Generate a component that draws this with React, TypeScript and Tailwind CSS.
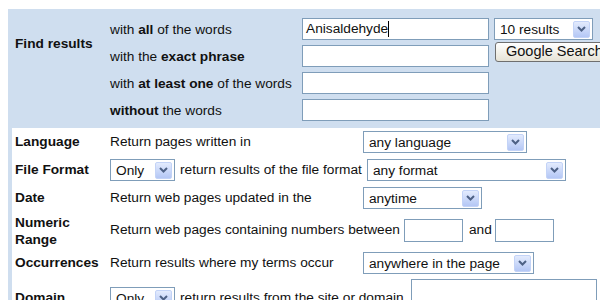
import React from "react";

const font = { fontFamily: '"Liberation Sans", Arial, sans-serif' };

function Chevron() {
  return (
    <div className="w-[17px] h-[17px] mr-[2px] rounded-[2px] bg-gradient-to-b from-[#e3ebfd] to-[#b4c7f5] border border-[#c3d3f7] flex items-center justify-center">
      <svg width="9" height="6" viewBox="0 0 9 6">
        <path d="M1 1 L4.5 4.5 L8 1" fill="none" stroke="#4d6185" strokeWidth="2" />
      </svg>
    </div>
  );
}

function Select({ value, w }: { value: string; w: string }) {
  return (
    <div className={`${w} h-[22px] bg-white border border-[#7f9db9] flex items-center shrink-0`}>
      <span className="flex-1 pl-[5px] pt-px leading-none whitespace-nowrap">{value}</span>
      <Chevron />
    </div>
  );
}

function TextBox({ w, h = "h-[22px]", children }: { w: string; h?: string; children?: React.ReactNode }) {
  return (
    <div className={`${w} ${h} bg-white border border-[#7f9db9] flex items-center pl-[3px] shrink-0`}>
      {children}
    </div>
  );
}

export default function App() {
  const rows = [
    <>with <b>all</b> of the words</>,
    <>with the <b>exact phrase</b></>,
    <>with <b>at least one</b> of the words</>,
    <><b>without</b> the words</>,
  ];

  return (
    <div className="w-[600px] h-[300px] overflow-hidden bg-white text-[#111] text-[13.7px]" style={font}>
      <div className="ml-[8px] mt-[9px] bg-[#cfdeef] w-[600px]">
        {/* Find results */}
        <div className="flex pb-[6px]">
          <div className="w-[102px] pl-[7px] pt-[25px] font-bold whitespace-nowrap">Find results</div>
          <div className="w-[192px] flex flex-col pt-[10px] gap-[5px]">
            {rows.map((r, i) => (
              <div key={i} className="h-[22px] flex items-center whitespace-nowrap">
                <span>{r}</span>
              </div>
            ))}
          </div>
          <div className="w-[187px] flex flex-col pt-[9px] gap-[5px]">
            <TextBox w="w-[187px]">
              <span>Anisaldehyde</span>
              <span className="inline-block w-px h-[16px] bg-black" />
            </TextBox>
            <TextBox w="w-[187px]" />
            <TextBox w="w-[187px]" />
            <TextBox w="w-[187px]" />
          </div>
          <div className="ml-[5px] flex flex-col pt-[9px]">
            <Select value="10 results" w="w-[99px]" />
            <div className="mt-[2px] ml-px h-[20px] w-[112px] rounded-[3px] border border-[#6f6f6f] bg-gradient-to-b from-white to-[#e6e3d6] flex items-center pl-[10px] whitespace-nowrap text-[14.5px]">
              Google Search
            </div>
          </div>
        </div>

        {/* Options */}
        <div className="ml-[4px] bg-white">
          <div className="h-[28px] flex items-center">
            <div className="w-[98px] pl-[3px] font-bold">Language</div>
            <div className="w-[253px]">Return pages written in</div>
            <Select value="any language" w="w-[164px]" />
          </div>
          <div className="h-[28px] flex items-center">
            <div className="w-[98px] pl-[3px] font-bold">File Format</div>
            <Select value="Only" w="w-[65px]" />
            <div className="w-[192px] pl-[5px] whitespace-nowrap">return results of the file format</div>
            <Select value="any format" w="w-[199px]" />
          </div>
          <div className="h-[28px] flex items-center">
            <div className="w-[98px] pl-[3px] font-bold">Date</div>
            <div className="w-[253px]">Return web pages updated in the</div>
            <Select value="anytime" w="w-[119px]" />
          </div>
          <div className="h-[37px] flex items-center">
            <div className="w-[98px] pl-[3px] font-bold leading-[17px]">
              Numeric
              <br />
              Range
            </div>
            <div className="w-[294px] whitespace-nowrap">Return web pages containing numbers between</div>
            <TextBox w="w-[59px]" h="h-[23px]" />
            <div className="w-[32px] pl-[6px]">and</div>
            <TextBox w="w-[59px]" h="h-[23px]" />
          </div>
          <div className="h-[28px] flex items-center">
            <div className="w-[98px] pl-[3px] font-bold">Occurrences</div>
            <div className="w-[253px] whitespace-nowrap">Return results where my terms occur</div>
            <Select value="anywhere in the page" w="w-[171px]" />
          </div>
          <div className="h-[42px] flex items-center">
            <div className="w-[98px] pl-[3px] font-bold">Domain</div>
            <Select value="Only" w="w-[65px]" />
            <div className="w-[236px] pl-[5px] whitespace-nowrap">return results from the site or domain</div>
            <TextBox w="w-[186px]" h="h-[38px]" />
          </div>
        </div>
      </div>
    </div>
  );
}
